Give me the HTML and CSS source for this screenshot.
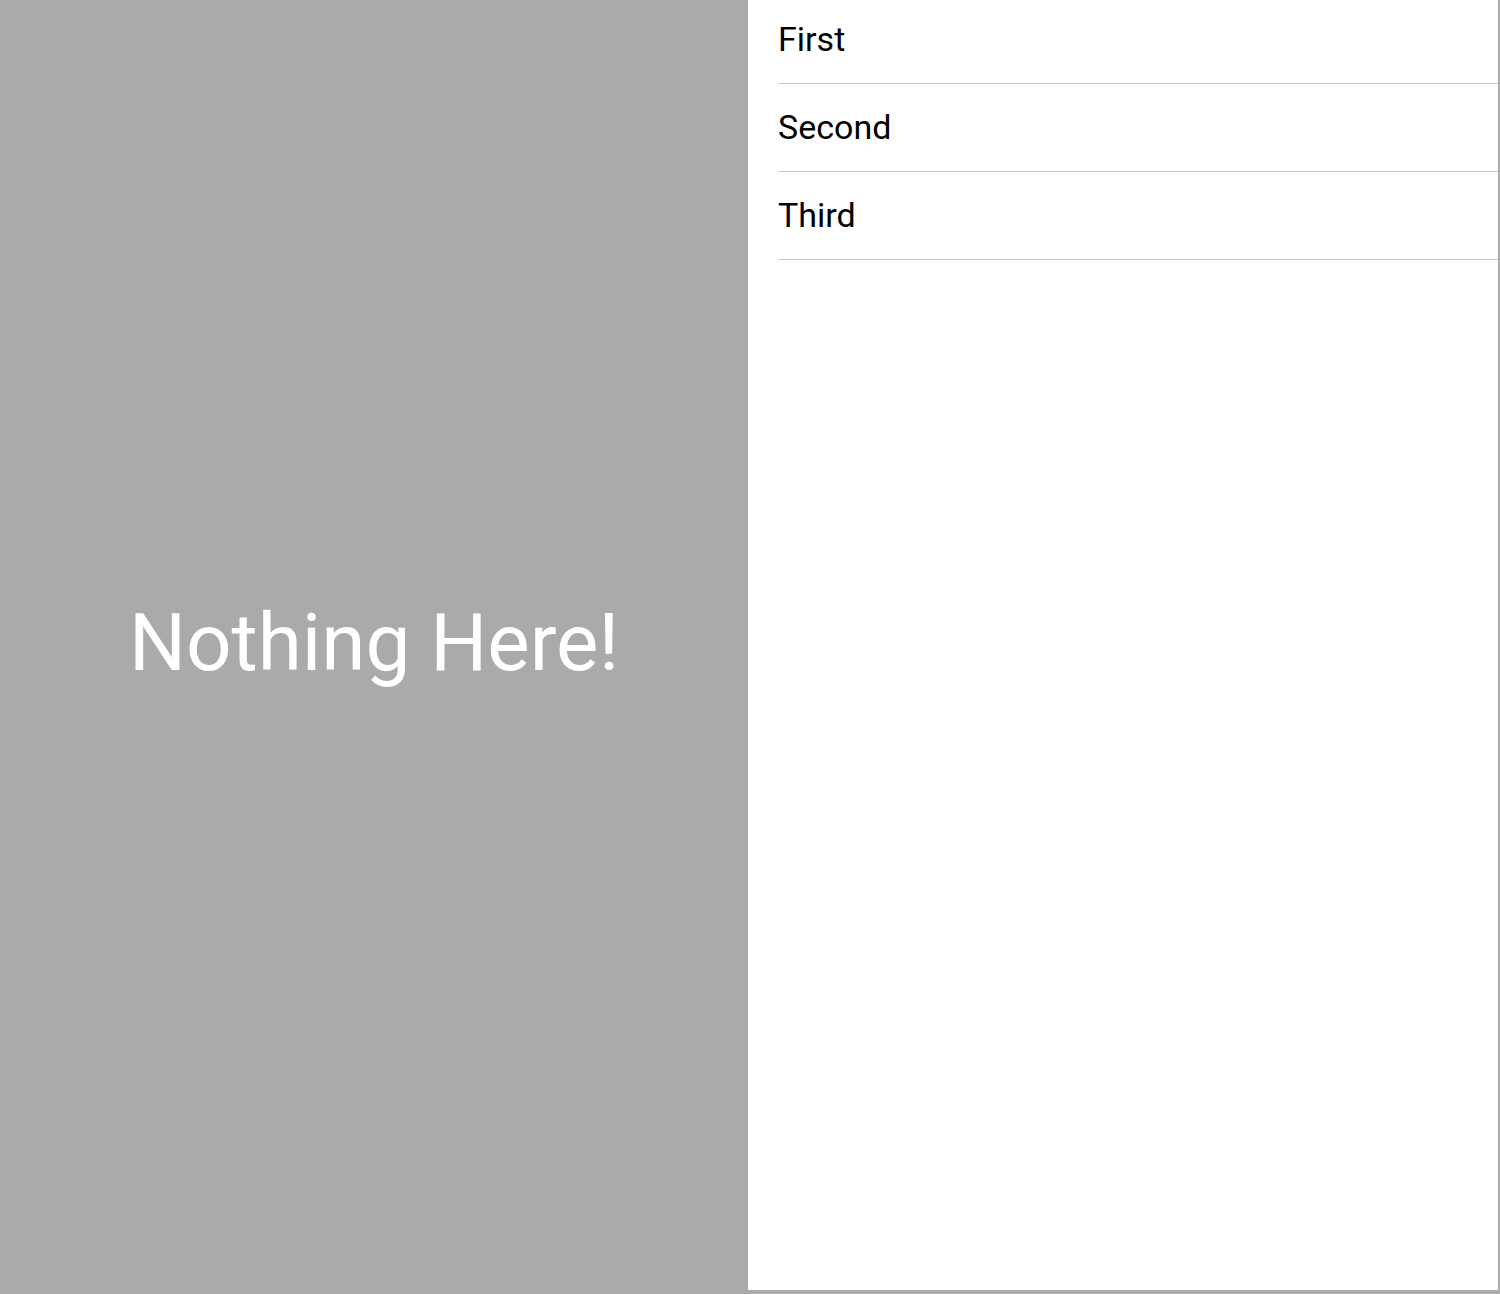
FILE: index.html
```html
<!DOCTYPE html>
<html>
<head>
<meta charset="utf-8">
<link rel="stylesheet" href="styles.css">
</head>
<body>
<div class="screen">
  <div class="detail">
    <div class="empty">Nothing Here!</div>
  </div>
  <div class="master">
    <ul class="list">
      <li class="row">First</li>
      <li class="row">Second</li>
      <li class="row">Third</li>
    </ul>
  </div>
</div>
</body>
</html>
```

FILE: styles.css
```css
html, body {
  margin: 0;
  padding: 0;
  background: #aaaaaa;
}
.screen {
  display: flex;
  width: 1500px;
  height: 1294px;
  background: #aaaaaa;
  font-family: Roboto, Inter, "Liberation Sans", sans-serif;
}
.detail {
  width: 748px;
  height: 1290px;
  display: flex;
  align-items: center;
  justify-content: center;
}
.empty {
  color: #ffffff;
  font-size: 80px;
  font-weight: 400;
  margin-top: -4px;
}
.master {
  width: 750px;
  height: 1290px;
  background: #ffffff;
  overflow: hidden;
}
.list {
  list-style: none;
  margin: -4px 0 0 30px;
  padding: 0;
}
.row {
  height: 85px;
  padding-bottom: 2px;
  border-bottom: 1px solid #c8c7cc;
  display: flex;
  align-items: center;
  font-size: 34px;
  color: #000000;
}
```
